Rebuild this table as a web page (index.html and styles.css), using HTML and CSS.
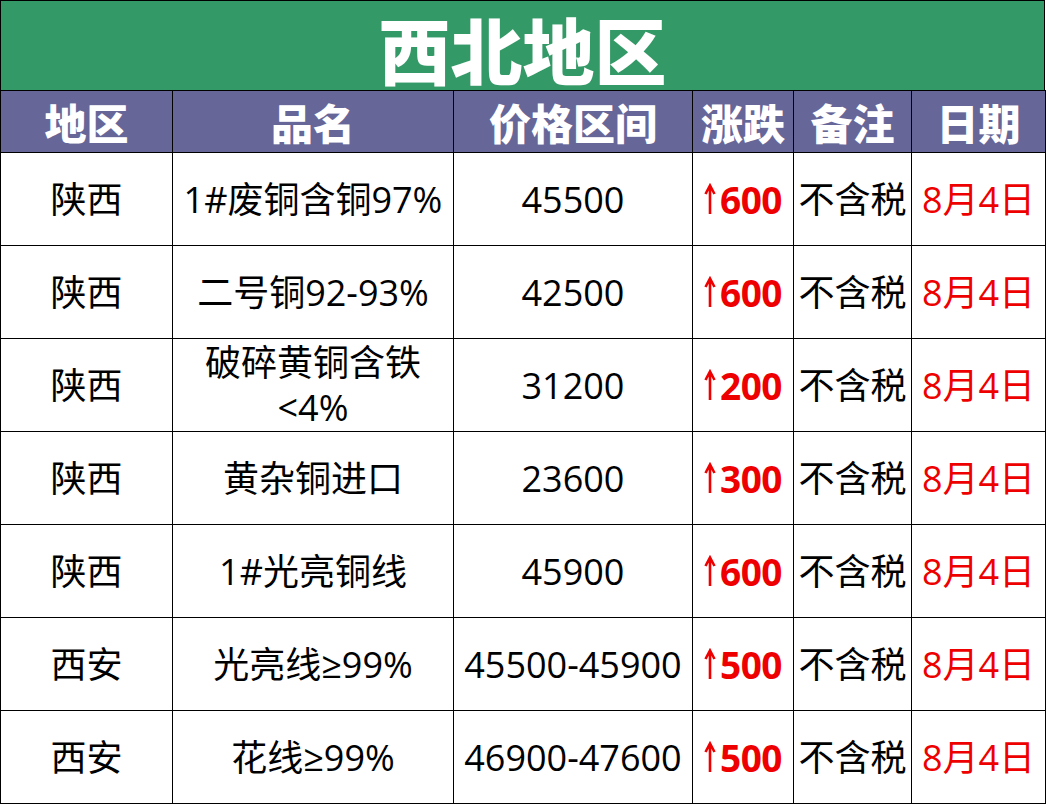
FILE: index.html
```html
<!DOCTYPE html>
<html lang="zh-CN">
<head>
<meta charset="utf-8">
<title>西北地区</title>
<link rel="stylesheet" href="styles.css">
</head>
<body>
<div class="sheet">
  <div class="title"><span class="title-text">西北地区</span></div>
  <table class="grid">
    <colgroup>
      <col class="c1"><col class="c2"><col class="c3"><col class="c4"><col class="c5"><col class="c6">
    </colgroup>
    <thead>
      <tr><th>地区</th><th>品名</th><th>价格区间</th><th>涨跌</th><th>备注</th><th>日期</th></tr>
    </thead>
    <tbody>
      <tr><td>陕西</td><td>1#废铜含铜97%</td><td>45500</td><td class="up"><svg class="arr" viewBox="0 0 12 31" aria-hidden="true"><path d="M6 31V4M1.5 11L6 2.5L10.5 11"/></svg>600</td><td>不含税</td><td class="date">8月4日</td></tr>
      <tr><td>陕西</td><td>二号铜92-93%</td><td>42500</td><td class="up"><svg class="arr" viewBox="0 0 12 31" aria-hidden="true"><path d="M6 31V4M1.5 11L6 2.5L10.5 11"/></svg>600</td><td>不含税</td><td class="date">8月4日</td></tr>
      <tr><td>陕西</td><td class="wrap">破碎黄铜含铁<br>&lt;4%</td><td>31200</td><td class="up"><svg class="arr" viewBox="0 0 12 31" aria-hidden="true"><path d="M6 31V4M1.5 11L6 2.5L10.5 11"/></svg>200</td><td>不含税</td><td class="date">8月4日</td></tr>
      <tr><td>陕西</td><td>黄杂铜进口</td><td>23600</td><td class="up"><svg class="arr" viewBox="0 0 12 31" aria-hidden="true"><path d="M6 31V4M1.5 11L6 2.5L10.5 11"/></svg>300</td><td>不含税</td><td class="date">8月4日</td></tr>
      <tr><td>陕西</td><td>1#光亮铜线</td><td>45900</td><td class="up"><svg class="arr" viewBox="0 0 12 31" aria-hidden="true"><path d="M6 31V4M1.5 11L6 2.5L10.5 11"/></svg>600</td><td>不含税</td><td class="date">8月4日</td></tr>
      <tr><td>西安</td><td>光亮线≥99%</td><td>45500-45900</td><td class="up"><svg class="arr" viewBox="0 0 12 31" aria-hidden="true"><path d="M6 31V4M1.5 11L6 2.5L10.5 11"/></svg>500</td><td>不含税</td><td class="date">8月4日</td></tr>
      <tr><td>西安</td><td>花线≥99%</td><td>46900-47600</td><td class="up"><svg class="arr" viewBox="0 0 12 31" aria-hidden="true"><path d="M6 31V4M1.5 11L6 2.5L10.5 11"/></svg>500</td><td>不含税</td><td class="date">8月4日</td></tr>
    </tbody>
  </table>
</div>
</body>
</html>
```
FILE: styles.css
```css
html, body {
  margin: 0;
  padding: 0;
  background: #ffffff;
}
.sheet {
  width: 1045px;
  font-family: "Open Sans", "Noto Sans CJK SC", sans-serif;
}
.title {
  height: 90px;
  box-sizing: border-box;
  padding-top: 11px;
  background: #339966;
  border: 1px solid #000;
  border-bottom: none;
  color: #ffffff;
  font-family: "Noto Sans CJK SC", sans-serif;
  font-weight: 900;
  font-size: 72px;
  line-height: 72px;
  text-align: center;
}
.title-text {
  display: inline-block;
  line-height: 72px;
}
.grid {
  width: 1045px;
  border-collapse: collapse;
  table-layout: fixed;
}
.c1 { width: 172px; }
.c2 { width: 281px; }
.c3 { width: 239px; }
.c4 { width: 101px; }
.c5 { width: 118px; }
.c6 { width: 134px; }
.grid th, .grid td {
  border: 1px solid #000;
  padding: 0;
  text-align: center;
  vertical-align: middle;
  white-space: nowrap;
}
.grid th {
  height: 61px;
  background: #666699;
  color: #ffffff;
  font-family: "Noto Sans CJK SC", sans-serif;
  font-weight: 900;
  font-size: 42px;
  line-height: 44px;
}
.grid td {
  height: 92px;
  color: #000;
  font-size: 36px;
  line-height: 45px;
}
.grid td.up {
  color: #ee0000;
  font-weight: 700;
  font-size: 37px;
  letter-spacing: -0.5px;
}
.arr {
  width: 12px;
  height: 31px;
  margin-right: 4px;
  vertical-align: baseline;
}
.arr path {
  fill: none;
  stroke: #ee0000;
  stroke-width: 2.6;
  stroke-linejoin: miter;
}
.grid td.date {
  color: #ee0000;
}
```
